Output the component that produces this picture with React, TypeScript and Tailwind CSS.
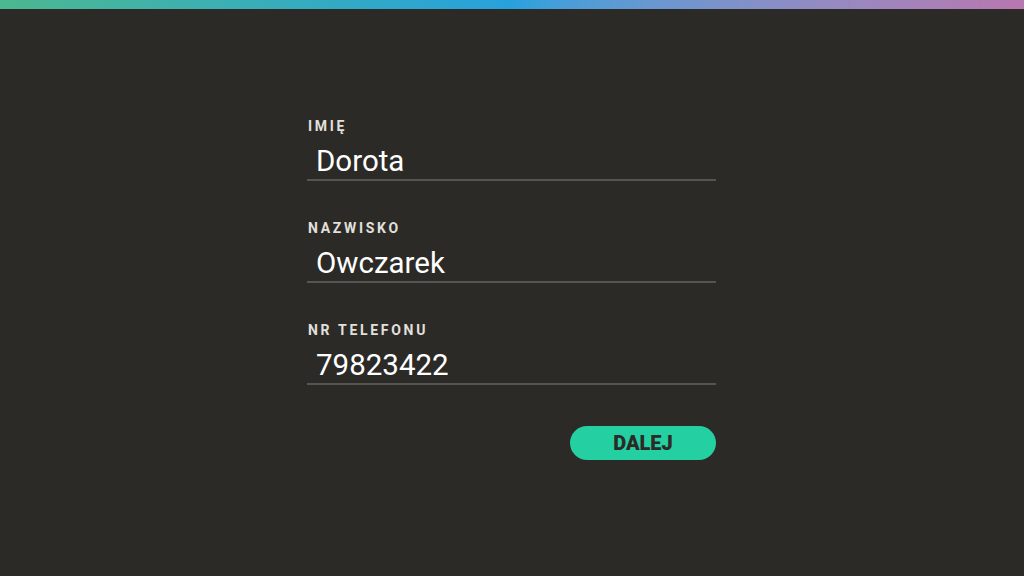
import React from "react";

type FieldProps = {
  label: string;
  value: string;
};

function Field({ label, value }: FieldProps) {
  return (
    <div className="flex flex-col">
      <span className="pl-px text-[14px] leading-4 font-bold tracking-[2.7px] text-[#e2e0dc]">{label}</span>
      <div className="mt-[9px] border-b-2 border-[#575552] pl-[9px] text-[29.5px] leading-9 text-white">
        {value}
      </div>
    </div>
  );
}

export default function App() {
  return (
    <div className="flex h-[576px] w-[1024px] flex-col bg-[#2c2a27] font-['Roboto',sans-serif]">
      <div className="h-[9px] w-full bg-gradient-to-r from-[#4cb88f] via-[#27a1dd] to-[#b877b0]" />
      <div className="ml-[307px] flex w-[409px] flex-col gap-[39px] pt-[109px]">
        <Field label="IMIĘ" value="Dorota" />
        <Field label="NAZWISKO" value="Owczarek" />
        <Field label="NR TELEFONU" value="79823422" />
      </div>
      <div className="ml-[307px] mt-[41px] flex w-[409px] justify-end">
        <button className="flex h-[34px] w-[146px] items-center justify-center rounded-full bg-[#24cfa2] text-[20px] font-black text-[#2c2a27]">
          DALEJ
        </button>
      </div>
    </div>
  );
}
